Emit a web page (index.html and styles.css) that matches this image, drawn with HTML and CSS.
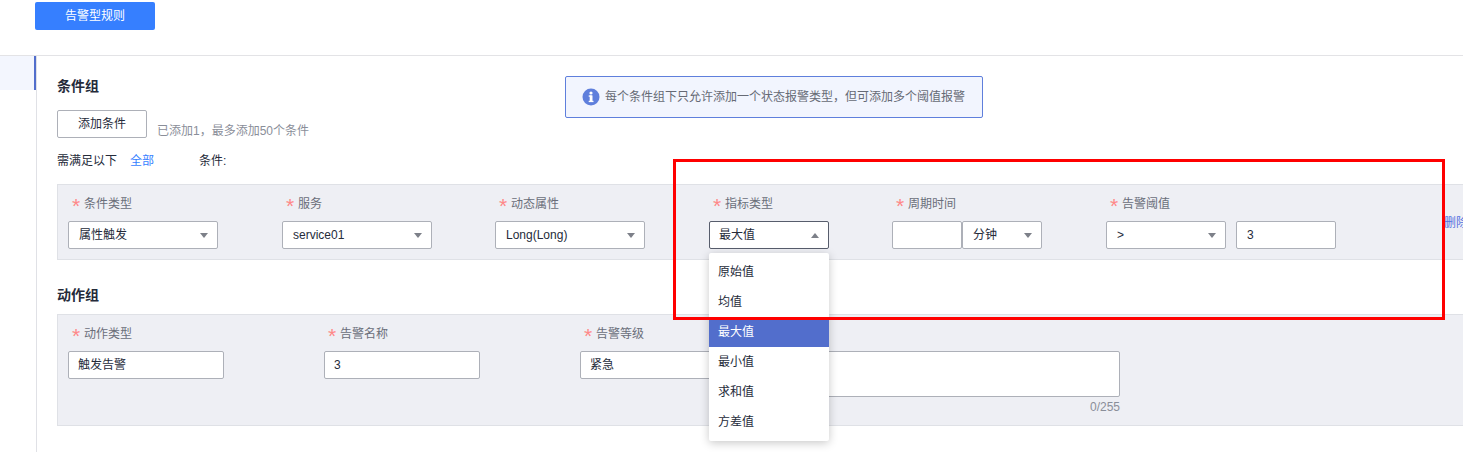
FILE: index.html
```html
<!DOCTYPE html>
<html lang="zh">
<head>
<meta charset="utf-8">
<title>告警规则</title>
<link rel="stylesheet" href="styles.css">
</head>
<body>
<header class="topbar"><button class="primary-btn">告警型规则</button></header>
<div class="main">
  <aside class="side"><div class="side-item"></div></aside>
  <section class="content">
    <h2 class="group-title">条件组</h2>
    <div class="add-row">
      <button class="plain-btn">添加条件</button>
      <span class="hint">已添加1，最多添加50个条件</span>
    </div>
    <div class="match-row">
      <span>需满足以下</span><a class="link">全部</a><span class="match-tail">条件:</span>
    </div>
    <div class="panel cond-panel">
      <div class="field"><div class="label"><i class="star">*</i>条件类型</div><div class="ctl w150">属性触发<b class="arrow"></b></div></div>
      <div class="field"><div class="label"><i class="star">*</i>服务</div><div class="ctl w150">service01<b class="arrow"></b></div></div>
      <div class="field"><div class="label"><i class="star">*</i>动态属性</div><div class="ctl w150">Long(Long)<b class="arrow"></b></div></div>
      <div class="field"><div class="label"><i class="star">*</i>指标类型</div><div class="ctl w120 open">最大值<b class="arrow up"></b></div></div>
      <div class="field"><div class="label"><i class="star">*</i>周期时间</div><div class="ctl-group"><div class="ctl w70"></div><div class="ctl w80">分钟<b class="arrow"></b></div></div></div>
      <div class="field"><div class="label"><i class="star">*</i>告警阈值</div><div class="ctl-group gap10"><div class="ctl w120">&gt;<b class="arrow"></b></div><div class="ctl w100">3</div></div></div>
      <a class="delete">删除</a>
    </div>
    <h2 class="group-title second">动作组</h2>
    <div class="panel action-panel">
      <div class="field"><div class="label"><i class="star">*</i>动作类型</div><div class="ctl w156 pad-s">触发告警</div></div>
      <div class="field"><div class="label"><i class="star">*</i>告警名称</div><div class="ctl w156 pad-s">3</div></div>
      <div class="field"><div class="label"><i class="star">*</i>告警等级</div><div class="ctl w156 pad-s">紧急</div></div>
      <div class="field area-field">
        <div class="area"></div>
        <div class="counter">0/255</div>
      </div>
    </div>
  </section>
</div>

<div class="notice">
  <svg class="notice-icon" viewBox="0 0 18 18" width="18" height="18"><circle cx="9" cy="9" r="8.5" fill="#5f7fdc"/><rect x="7.7" y="7.4" width="2.8" height="6.6" fill="#fff"/><rect x="6.7" y="7.4" width="3" height="1.3" fill="#fff"/><rect x="6.7" y="12.8" width="4.8" height="1.3" fill="#fff"/><circle cx="9" cy="5" r="1.6" fill="#fff"/></svg>
  <span>每个条件组下只允许添加一个状态报警类型，但可添加多个阈值报警</span>
</div>

<ul class="dropdown">
  <li>原始值</li>
  <li>均值</li>
  <li class="selected">最大值</li>
  <li>最小值</li>
  <li>求和值</li>
  <li>方差值</li>
</ul>

<div class="annotation"></div>
</body>
</html>
```
FILE: styles.css
```css
* { box-sizing: border-box; }
html, body { margin: 0; padding: 0; height: 100%; overflow: hidden; }
body {
  position: relative;
  background: #fff;
  color: #252b3a;
  font: 12px/20px "Liberation Sans", "Noto Sans CJK SC", sans-serif;
}
button { font: inherit; cursor: pointer; }

.topbar {
  height: 56px;
  padding: 2px 0 0 35px;
  border-bottom: 1px solid #e3e3e6;
}
.primary-btn {
  display: block;
  width: 120px;
  height: 28px;
  padding: 0;
  border: 0;
  border-radius: 2px;
  background: #367fff;
  color: #fff;
}

.main { display: flex; height: 396px; }
.side { flex: none; width: 37px; border-right: 1px solid #e0e1e6; }
.side-item {
  height: 34px;
  width: 36px;
  background: #f3f6fe;
  border-right: 2px solid #526ecc;
}
.content { flex: none; width: 1440px; padding: 20px 0 0 20px; }

.group-title { margin: 0; font-size: 14px; line-height: 20px; font-weight: 700; color: #252b3a; }
.group-title.second { margin-top: 25px; }

.add-row { display: flex; align-items: flex-end; margin-top: 14px; }
.plain-btn {
  width: 90px;
  height: 28px;
  padding: 0;
  border: 1px solid #adb0b8;
  border-radius: 2px;
  background: #fff;
  color: #252b3a;
}
.hint { margin-left: 10px; line-height: 14px; color: #8a8e99; }

.match-row { display: flex; margin-top: 13px; height: 20px; }
.link { margin-left: 13px; color: #367fff; }
.match-tail { margin-left: 45px; }

.panel {
  display: grid;
  position: relative;
  width: 1420px;
  margin-top: 13px;
  padding: 9px 10px 0;
  border: 1px solid #dfe1e6;
  background: #eeeff4;
}
.cond-panel {
  height: 76px;
  grid-template-columns: 214px 213px 214px 183px 214px 339px 30px;
}
.action-panel {
  height: 112px;
  margin-top: 9px;
  grid-template-columns: 256px 256px 220px 320px;
}

.label { height: 20px; margin-bottom: 7px; padding-left: 4px; line-height: 20px; color: #6a6e7a; white-space: nowrap; }
.star {
  display: inline-block;
  width: 12px;
  font: 21px/20px "Liberation Sans", sans-serif;
  font-style: normal;
  color: #f88;
  vertical-align: top;
  padding-top: 2px;
}

.ctl {
  display: flex;
  align-items: center;
  position: relative;
  height: 28px;
  padding-left: 10px;
  border: 1px solid #adb0b8;
  border-radius: 2px;
  background: #fff;
  color: #252b3a;
  white-space: nowrap;
}
.ctl.open { border-color: #575d6c; padding-left: 9px; }
.pad-s { padding-left: 9px; }
.w150 { width: 150px; }
.w120 { width: 120px; }
.w156 { width: 156px; }
.w100 { width: 100px; }
.w80 { width: 80px; }
.w70 { width: 70px; }
.ctl-group { display: flex; }
.gap10 { gap: 10px; }

.arrow {
  position: absolute;
  right: 9px;
  top: 11px;
  width: 0;
  height: 0;
  border-left: 4px solid transparent;
  border-right: 4px solid transparent;
  border-top: 5px solid #7d8089;
}
.arrow.up { border-top: 0; border-bottom: 5px solid #7d8089; }

.delete { position: relative; top: 19px; left: -1px; color: #5470e0; white-space: nowrap; }

.area-field { padding-top: 27px; }
.area {
  height: 46px;
  border: 1px solid #adb0b8;
  border-radius: 2px;
  background: #fff;
}
.counter { text-align: right; color: #8a8e99; }

.notice {
  position: absolute;
  left: 565px;
  top: 76px;
  display: flex;
  align-items: center;
  width: 418px;
  height: 42px;
  padding-left: 16px;
  border: 1px solid #5f7fdc;
  border-radius: 2px;
  background: #f2f5fe;
  color: #666a75;
}
.notice-icon { flex: none; margin-right: 5px; }

.dropdown {
  position: absolute;
  left: 709px;
  top: 253px;
  width: 120px;
  margin: 0;
  padding: 4px 0;
  list-style: none;
  border-radius: 2px;
  background: #fff;
  box-shadow: 0 2px 10px rgba(0, 0, 0, .22);
}
.dropdown li { height: 30px; padding-left: 9px; line-height: 30px; color: #252b3a; }
.dropdown li.selected { background: #526ecc; color: #fff; }

.annotation {
  position: absolute;
  left: 673px;
  top: 159px;
  width: 772px;
  height: 161px;
  border: 3px solid #f00;
  pointer-events: none;
}
```
